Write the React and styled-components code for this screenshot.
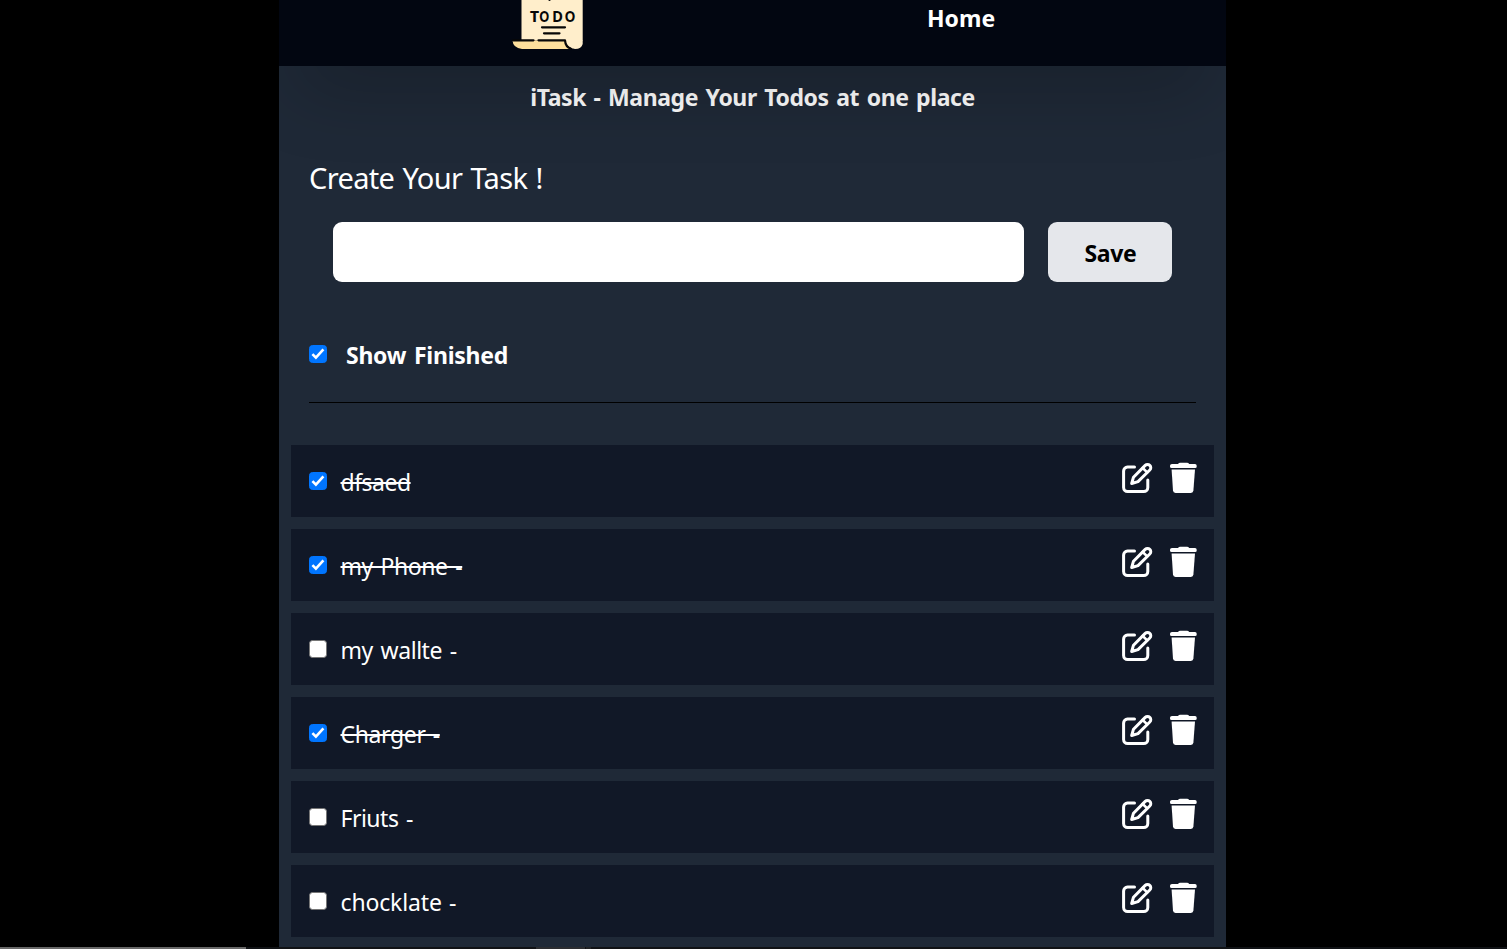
import React, { useState } from "react";
import styled, { createGlobalStyle } from "styled-components";

const GlobalStyle = createGlobalStyle`
  * { box-sizing: border-box; }
  html, body { margin: 0; height: 100%; overflow: hidden; background: #000; }
  body { font-family: "Noto Sans", "Open Sans", sans-serif; font-size: 23px; color: #fff; }
`;

const Page = styled.div`
  height: 949px;
  display: flex;
  flex-direction: column;
  overflow: hidden;
  background: #000;
`;

const Column = styled.div`
  width: 947px;
  height: 947px;
  flex: none;
  margin-left: 279px;
  background: #1f2937;
  overflow: hidden;
`;

const Nav = styled.nav`
  position: relative;
  z-index: 1;
  display: flex;
  align-items: center;
  height: 94px;
  margin-top: -28px;
  padding-left: 230px;
  background: #020611;
  box-shadow: 0 37px 75px -18px rgba(0, 0, 0, 0.25);

  > span { padding-bottom: 2px; }
`;

const Logo = styled.svg`
  flex: none;
  width: 78px;
  height: 80px;
  margin-right: 340px;
`;

const Label = styled.span`
  font-size: ${(p) => p.$size || 23}px;
  font-weight: ${(p) => (p.$bold ? 700 : 400)};
  letter-spacing: ${(p) => p.$track ?? (p.$bold ? -0.25 : -0.3)}px;
  word-spacing: ${(p) => p.$words ?? (p.$bold ? 2 : 1.5)}px;
  text-decoration: ${(p) => (p.$done ? "line-through 2px" : "none")};
  line-height: 36px;
  white-space: nowrap;
`;

const Content = styled.main`
  display: flex;
  flex-direction: column;
  padding: 13px 12px 0;
`;

const Title = styled.h1`
  margin: 0;
  height: 36px;
  text-align: center;
  font-size: inherit;
  line-height: 36px;
`;

const Heading = styled.h2`
  margin: 45px 18px 0;
  height: 36px;
  font-size: inherit;
  line-height: 36px;
`;

const Form = styled.form`
  display: flex;
  gap: 24px;
  margin: 26px 42px 0;
`;

const TaskInput = styled.input`
  width: 691px;
  height: 60px;
  border: 0;
  border-radius: 9px;
  background: #fff;
  padding: 0 18px;
  font: inherit;
  outline: none;
`;

const SaveButton = styled.button`
  width: 124px;
  height: 60px;
  padding: 1px 0 0 1px;
  border: 0;
  border-radius: 9px;
  background: #e5e7eb;
  color: #000;
  font-family: inherit;
`;

const CheckboxBox = styled.span`
  display: grid;
  flex: none;
  width: 18px;
  height: 18px;

  > * { grid-area: 1 / 1; }
`;

const CheckboxInput = styled.input.attrs({ type: "checkbox" })`
  appearance: none;
  width: 18px;
  height: 18px;
  margin: 0;
  border: 1px solid #767676;
  border-radius: 3.5px;
  background: #fff;

  &:checked {
    border-color: #0075ff;
    background: #0075ff;
  }
  & + svg { visibility: hidden; pointer-events: none; }
  &:checked + svg { visibility: visible; }
`;

const Checkbox = (props) => (
  <CheckboxBox>
    <CheckboxInput {...props} />
    <svg width="18" height="18" viewBox="0 0 18 18" fill="none" stroke="#fff" strokeWidth="2.6">
      <path d="M3.4 9.2L6.9 12.7L14.4 4.4" />
    </svg>
  </CheckboxBox>
);

const Filter = styled.label`
  display: flex;
  align-items: center;
  gap: 19px;
  height: 36px;
  margin: 54px 18px 0;

  ${Label} { padding-top: 1px; }
`;

const Divider = styled.hr`
  width: 887px;
  height: 1px;
  margin: 30px 18px 42px;
  border: 0;
  background: #000;
`;

const List = styled.div`
  display: flex;
  flex-direction: column;
  gap: 12px;
`;

const Row = styled.div`
  display: flex;
  align-items: center;
  height: 72px;
  padding: 0 17px 0 18px;
  background: #111827;

  ${Label} { margin-left: 13.5px; padding-top: 1px; }
`;

const Actions = styled.div`
  display: flex;
  gap: 17px;
  margin: 0 0 6px auto;
`;

const IconButton = styled.button`
  display: flex;
  padding: 0;
  border: 0;
  background: none;
  color: #fff;
`;

const Taskbar = styled.div`
  display: flex;
  height: 2px;
  background: #101215;
`;

const Segment = styled.div`
  width: ${(p) => p.$width}px;
  margin-left: ${(p) => p.$offset || 0}px;
  background: ${(p) => p.$color};
`;

const EditIcon = () => (
  <svg width="31" height="32" viewBox="0 0 31 32" fill="none" stroke="currentColor" strokeWidth="3" strokeLinecap="round" strokeLinejoin="round">
    <path d="M12.5 5H5.5A4 4 0 0 0 1.6 9V25.5A4 4 0 0 0 5.6 29.5H21.8A4 4 0 0 0 25.8 25.5V18" />
    <path d="M9.7 21.5L11.5 15.2L23.2 3.4A3.2 3.2 0 0 1 27.8 3.4A3.2 3.2 0 0 1 27.8 8L16 19.6Z" />
    <path d="M20.7 6L25.2 10.4" strokeWidth="2.6" />
  </svg>
);

const TrashIcon = () => (
  <svg width="27" height="32" viewBox="0 0 27 32" fill="currentColor">
    <path d="M2 2H8Q8.8 .7 10.3 .7H17Q18.4 .7 19.2 2H25Q26.7 2 26.7 3.8V4.4Q26.7 6 25.2 6H1.6Q0 6 0 4.4V3.8Q0 2 2 2Z" />
    <path d="M1.6 7.4H25L23.4 28.6Q23.2 31 20.9 31H5.5Q3.2 31 3 28.6Z" />
  </svg>
);

const TodoLogo = () => (
  <Logo viewBox="0 0 78 80">
    <path d="M12.5 4H73.7V61.5H12.5Z" fill="#ffeecb" />
    <path d="M3.5 61.5H56Q57 69 64 70H13Q4 69 3.5 61.5Z" fill="#fddf9c" />
    <path d="M56 61H73.7V65Q72.5 70 66 70Q57.5 69 56 61Z" fill="#ffeecb" />
    <g fill="none" stroke="#070707" strokeWidth="2.2" strokeLinecap="round" strokeLinejoin="round">
      <path d="M40.5 14V21" />
      <path d="M4 61.3H24.5M29.5 61.3H56Q56.5 68 62 69.7" />
      <path d="M33 48.3H56M35 54.3H50.5" />
    </g>
    <g fill="#070707" fontFamily="Lato, sans-serif" fontWeight="800" fontSize="15.5" lengthAdjust="spacingAndGlyphs">
      <text x="21" y="43" textLength="9" lengthAdjust="spacingAndGlyphs">T</text>
      <text x="30.5" y="43" textLength="9.5" lengthAdjust="spacingAndGlyphs">O</text>
      <text x="43.5" y="43" textLength="10" lengthAdjust="spacingAndGlyphs">D</text>
      <text x="56" y="43" textLength="10" lengthAdjust="spacingAndGlyphs">O</text>
    </g>
  </Logo>
);

const initialTasks = [
  { text: "dfsaed", done: true, track: -0.5 },
  { text: "my Phone -", done: true, track: -0.45, words: 2.2 },
  { text: "my wallte -", done: false, track: -0.45, words: 2.2 },
  { text: "Charger -", done: true, track: -0.35 },
  { text: "Friuts -", done: false, track: -0.5, words: 2 },
  { text: "chocklate -", done: false, track: -0.15 },
];

export default function App() {
  const [tasks, setTasks] = useState(initialTasks);
  const toggle = (index) =>
    setTasks(tasks.map((t, i) => (i === index ? { ...t, done: !t.done } : t)));

  return (
    <Page>
      <GlobalStyle />
      <Column>
        <Nav>
          <TodoLogo />
          <Label $bold $track={0}>Home</Label>
        </Nav>
        <Content>
          <Title><Label $bold $track={-0.42}>iTask - Manage Your Todos at one place</Label></Title>
          <Heading><Label $size={29} $track={-0.65} $words={1.3}>Create Your Task !</Label></Heading>
          <Form onSubmit={(e) => e.preventDefault()}>
            <TaskInput />
            <SaveButton><Label $bold $track={-0.35}>Save</Label></SaveButton>
          </Form>
          <Filter>
            <Checkbox defaultChecked />
            <Label $bold>Show Finished</Label>
          </Filter>
          <Divider />
          <List>
            {tasks.map((task, i) => (
              <Row key={task.text}>
                <Checkbox checked={task.done} onChange={() => toggle(i)} />
                <Label $done={task.done} $track={task.track} $words={task.words}>{task.text}</Label>
                <Actions>
                  <IconButton><EditIcon /></IconButton>
                  <IconButton><TrashIcon /></IconButton>
                </Actions>
              </Row>
            ))}
          </List>
        </Content>
      </Column>
      <Taskbar>
        <Segment $width={246} $color="#686868" />
        <Segment $width={49} $offset={290} $color="#2b2d31" />
        <Segment $width={5} $offset={1} $color="#202225" />
      </Taskbar>
    </Page>
  );
}
